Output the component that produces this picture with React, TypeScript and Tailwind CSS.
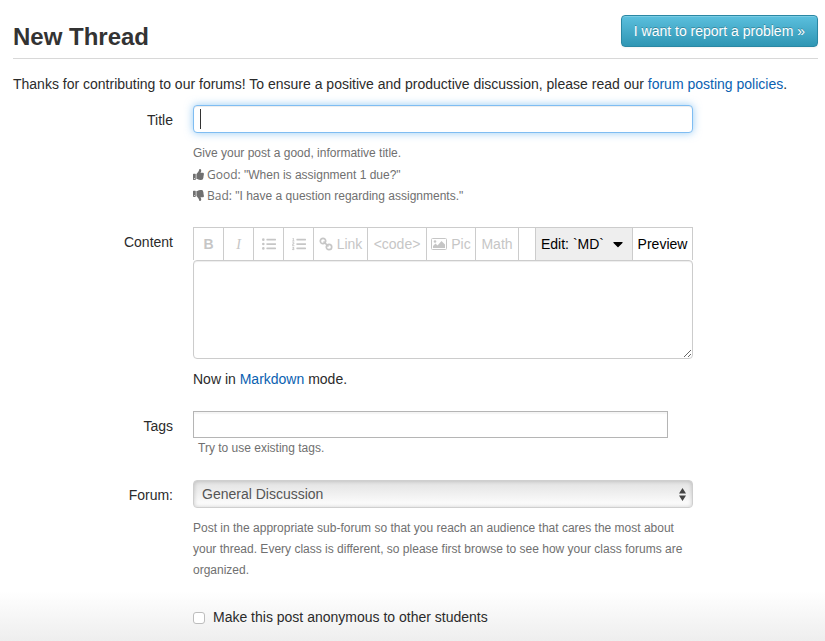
import type { ReactNode } from "react";
import { FaThumbsUp, FaThumbsDown, FaListUl, FaListOl, FaCaretDown } from "react-icons/fa";

function Row({ label, htmlFor, className = "", children }: { label?: string; htmlFor?: string; className?: string; children: ReactNode }) {
  return (
    <div className={`grid grid-cols-[160px_minmax(0,500px)] gap-x-5 ${className}`}>
      {label ? (
        <label htmlFor={htmlFor} className="pt-1 text-right leading-[22px]">
          {label}
        </label>
      ) : (
        <span />
      )}
      <div className="min-w-0">{children}</div>
    </div>
  );
}

function Tool({ title, className, children }: { title: string; className: string; children?: ReactNode }) {
  return (
    <button
      type="button"
      title={title}
      className={`flex h-8 shrink-0 items-center justify-center border-l border-[#cccccc] text-[#c6c6c6] ${className}`}
    >
      {children}
    </button>
  );
}

function ChainIcon() {
  return (
    <svg viewBox="0 0 14 14" className="h-3.5 w-3.5" fill="none" stroke="currentColor" strokeWidth="1.700">
      <circle cx="4" cy="4" r="2.7" />
      <circle cx="10" cy="10" r="2.7" />
      <path d="M4.500 4.500 L9.500 9.500" />
    </svg>
  );
}

function PictureIcon() {
  return (
    <svg viewBox="0 0 16 14" className="h-3.5 w-4" fill="none">
      <rect x="0.5" y="1.5" width="15" height="11" rx="1" stroke="currentColor" />
      <circle cx="4" cy="4.5" r="1.3" fill="currentColor" />
      <path d="M2 11 V9 L4.500 6.500 L6.500 8.500 L10.500 4 L14 7.500 V11 Z" fill="currentColor" />
    </svg>
  );
}

export default function App() {
  return (
    <div className="min-h-screen bg-[linear-gradient(to_top,#eeeeee,#ffffff_50px)] pr-[7px] pb-3 pl-[13px] pt-[15px] font-['Liberation_Sans',Arial,sans-serif] text-[14px] leading-[21px] text-[#2b2b2b]">
      <header className="flex items-start justify-between border-b border-[#d8d8d8] pb-[3px]">
        <h1 className="pt-1 text-[24px] leading-9 font-bold text-[#333333]">New Thread</h1>
        <button
          type="button"
          className="h-8 rounded-[4px] border border-[#2a87a3] bg-linear-to-b from-[#5bc0de] to-[#2f96b4] px-3 text-white shadow-[inset_0_1px_0_rgba(255,255,255,0.2),0_1px_2px_rgba(0,0,0,0.05)] [text-shadow:0_-1px_0_rgba(0,0,0,0.25)]"
        >
          I want to report a problem »
        </button>
      </header>

      <p className="pt-[15px]">
        Thanks for contributing to our forums! To ensure a positive and productive discussion, please read our{" "}
        <a href="#policies" className="text-[#0a61b1]">
          forum posting policies
        </a>
        .
      </p>

      <form>
        <Row label="Title" htmlFor="title" className="mt-[10px]">
          <div className="relative">
            <input
              id="title"
              type="text"
              className="block h-7 w-full rounded-[4px] border border-[#7fbdf2] bg-white px-1.5 shadow-[inset_0_1px_1px_rgba(0,0,0,0.075),0_0_8px_rgba(82,168,236,0.6)] outline-none"
            />
            <span aria-hidden="true" className="absolute top-1 left-[7px] h-5 w-px bg-[#333333]" />
          </div>
          <div className="mt-[10px] text-[12px] text-[#707070]">
            <p>Give your post a good, informative title.</p>
            <p className="flex h-[21px] items-center gap-[3px]">
              <FaThumbsUp className="h-[11px] w-[11px]" />
              <span>
                <span className="font-['Open_Sans',sans-serif]">Good:</span> "When is assignment 1 due?"
              </span>
            </p>
            <p className="flex h-[21px] items-center gap-[3px]">
              <FaThumbsDown className="h-[11px] w-[11px]" />
              <span>
                <span className="font-['Open_Sans',sans-serif]">Bad:</span> "I have a question regarding assignments."
              </span>
            </p>
          </div>
        </Row>

        <Row label="Content" htmlFor="content" className="mt-[21px]">
          <div className="flex border-t border-r border-[#cccccc]">
            <Tool title="Bold" className="w-[30px] font-bold">B</Tool>
            <Tool title="Italic" className="w-[30px] font-['Liberation_Serif',serif] italic">I</Tool>
            <Tool title="Bulleted list" className="w-[30px]"><FaListUl className="h-3.5 w-3.5" /></Tool>
            <Tool title="Numbered list" className="w-[30px]"><FaListOl className="h-3.5 w-3.5" /></Tool>
            <Tool title="Link" className="w-[54px] gap-1"><ChainIcon />Link</Tool>
            <Tool title="Code" className="w-[59px]">&lt;code&gt;</Tool>
            <Tool title="Picture" className="w-[49px] gap-1"><PictureIcon />Pic</Tool>
            <Tool title="Math" className="w-[43px]">Math</Tool>
            <span className="min-w-0 flex-1 border-l border-[#cccccc]" />
            <button type="button" className="flex h-8 w-[97px] shrink-0 items-center gap-1.5 border-l border-[#cccccc] bg-[#eeeeee] pl-[5px] text-black">
              Edit: `MD` <FaCaretDown className="h-4 w-4" />
            </button>
            <button type="button" className="flex h-8 w-[60px] shrink-0 items-center justify-center border-l border-[#cccccc] bg-white text-black">
              Preview
            </button>
          </div>
          <textarea
            id="content"
            className="block h-[99px] w-full resize rounded-[4px] border border-[#cccccc] bg-white p-1.5 shadow-[inset_0_1px_1px_rgba(0,0,0,0.075)] outline-none"
          />
          <p className="mt-[10px]">
            Now in{" "}
            <a href="#markdown" className="text-[#0a61b1]">
              Markdown
            </a>{" "}
            mode.
          </p>
        </Row>

        <Row label="Tags" htmlFor="tags" className="mt-[21px]">
          <input
            id="tags"
            type="text"
            className="block h-[27px] w-[95%] border border-[#b5b5b5] bg-white px-1.5 shadow-[inset_0_2px_1px_rgba(0,0,0,0.04)] outline-none"
          />
          <p className="pl-[5px] text-[12px] text-[#707070]">Try to use existing tags.</p>
        </Row>

        <Row label="Forum:" htmlFor="forum" className="mt-[21px]">
          <div className="relative">
            <select
              id="forum"
              className="block h-7 w-full appearance-none rounded-[4px] border border-[#cfcfcf] bg-linear-to-b from-[#e2e2e2] to-white px-2 text-[#555555] shadow-[inset_0_0_4px_rgba(0,0,0,0.2)] outline-none"
            >
              <option>General Discussion</option>
            </select>
            <svg viewBox="0 0 7 13" className="pointer-events-none absolute top-2 right-[7px] h-[13px] w-[7px]" fill="#444444">
              <path d="M3.500 0 L7 5.500 H0 Z M0 7.500 H7 L3.500 13 Z" />
            </svg>
          </div>
          <p className="mt-[10px] text-[12px] text-[#707070]">
            Post in the appropriate sub-forum so that you reach an audience that cares the most about your thread. Every class is different, so please first browse to see how your class forums are organized.
          </p>
        </Row>

        <Row className="mt-[26px]">
          <label className="flex items-center gap-2">
            <input
              type="checkbox"
              className="h-3 w-3 appearance-none rounded-[3px] border border-[#bdbdbd] bg-white checked:bg-[#0a61b1]"
            />
            Make this post anonymous to other students
          </label>
        </Row>
      </form>
    </div>
  );
}
